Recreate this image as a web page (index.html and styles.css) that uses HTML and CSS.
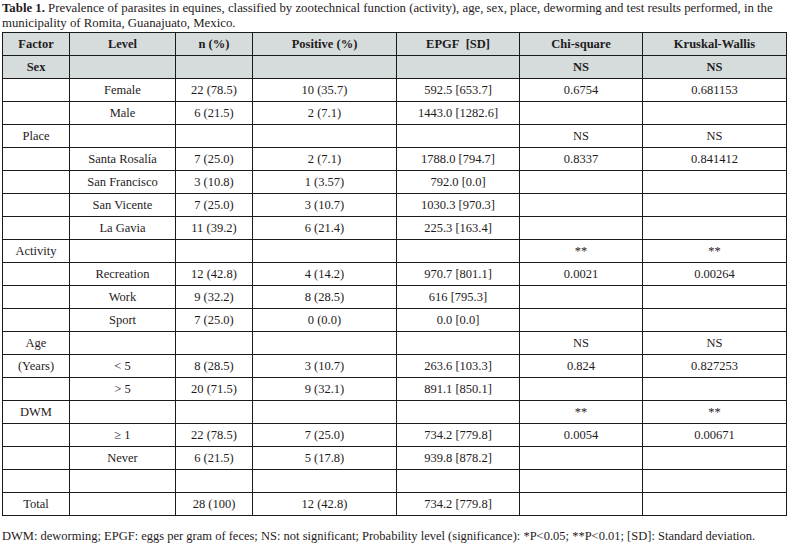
FILE: index.html
```html
<!DOCTYPE html>
<html>
<head>
<meta charset="utf-8">
<link rel="stylesheet" href="styles.css">
</head>
<body>
<div class="page">
  <p class="caption"><b>Table 1.</b> Prevalence of parasites in equines, classified by zootechnical function (activity), age, sex, place, deworming and test results performed, in the municipality of Romita, Guanajuato, Mexico.</p>
  <table class="data">
    <colgroup>
      <col class="c1"><col class="c2"><col class="c3"><col class="c4"><col class="c5"><col class="c6"><col class="c7">
    </colgroup>
    <tr class="head"><th>Factor</th><th>Level</th><th>n (%)</th><th>Positive (%)</th><th>EPGF&nbsp; [SD]</th><th>Chi-square</th><th>Kruskal-Wallis</th></tr>
    <tr class="head"><th>Sex</th><td></td><td></td><td></td><td></td><th>NS</th><th>NS</th></tr>
    <tr><td></td><td>Female</td><td>22 (78.5)</td><td>10 (35.7)</td><td>592.5 [653.7]</td><td>0.6754</td><td>0.681153</td></tr>
    <tr><td></td><td>Male</td><td>6 (21.5)</td><td>2 (7.1)</td><td>1443.0 [1282.6]</td><td></td><td></td></tr>
    <tr><td>Place</td><td></td><td></td><td></td><td></td><td>NS</td><td>NS</td></tr>
    <tr><td></td><td>Santa Rosalía</td><td>7 (25.0)</td><td>2 (7.1)</td><td>1788.0 [794.7]</td><td>0.8337</td><td>0.841412</td></tr>
    <tr><td></td><td>San Francisco</td><td>3 (10.8)</td><td>1 (3.57)</td><td>792.0 [0.0]</td><td></td><td></td></tr>
    <tr><td></td><td>San Vicente</td><td>7 (25.0)</td><td>3 (10.7)</td><td>1030.3 [970.3]</td><td></td><td></td></tr>
    <tr><td></td><td>La Gavia</td><td>11 (39.2)</td><td>6 (21.4)</td><td>225.3 [163.4]</td><td></td><td></td></tr>
    <tr><td>Activity</td><td></td><td></td><td></td><td></td><td>**</td><td>**</td></tr>
    <tr><td></td><td>Recreation</td><td>12 (42.8)</td><td>4 (14.2)</td><td>970.7 [801.1]</td><td>0.0021</td><td>0.00264</td></tr>
    <tr><td></td><td>Work</td><td>9 (32.2)</td><td>8 (28.5)</td><td>616 [795.3]</td><td></td><td></td></tr>
    <tr><td></td><td>Sport</td><td>7 (25.0)</td><td>0 (0.0)</td><td>0.0 [0.0]</td><td></td><td></td></tr>
    <tr><td>Age</td><td></td><td></td><td></td><td></td><td>NS</td><td>NS</td></tr>
    <tr><td>(Years)</td><td>&lt; 5</td><td>8 (28.5)</td><td>3 (10.7)</td><td>263.6 [103.3]</td><td>0.824</td><td>0.827253</td></tr>
    <tr><td></td><td>&gt; 5</td><td>20 (71.5)</td><td>9 (32.1)</td><td>891.1 [850.1]</td><td></td><td></td></tr>
    <tr><td>DWM</td><td></td><td></td><td></td><td></td><td>**</td><td>**</td></tr>
    <tr><td></td><td>≥ 1</td><td>22 (78.5)</td><td>7 (25.0)</td><td>734.2 [779.8]</td><td>0.0054</td><td>0.00671</td></tr>
    <tr><td></td><td>Never</td><td>6 (21.5)</td><td>5 (17.8)</td><td>939.8 [878.2]</td><td></td><td></td></tr>
    <tr><td></td><td></td><td></td><td></td><td></td><td></td><td></td></tr>
    <tr><td>Total</td><td></td><td>28 (100)</td><td>12 (42.8)</td><td>734.2 [779.8]</td><td></td><td></td></tr>
  </table>
  <p class="note">DWM: deworming; EPGF: eggs per gram of feces; NS: not significant; Probability level (significance): *P&lt;0.05; **P&lt;0.01; [SD]: Standard deviation.</p>
</div>
</body>
</html>
```
FILE: styles.css
```css
html, body {
  margin: 0;
  padding: 0;
  background: #ffffff;
}
.page {
  padding: 0 2px;
  font-family: "Liberation Serif", "DejaVu Serif", serif;
  color: #1f1b1c;
  font-size: 12.5px;
}
.caption {
  margin: 0;
  padding-top: 1px;
  line-height: 15px;
  height: 31px;
  font-size: 12.8px;
}
.data {
  border-collapse: collapse;
  width: 784px;
  table-layout: fixed;
}
.c1 { width: 67px; }
.c2 { width: 106px; }
.c3 { width: 77px; }
.c4 { width: 144px; }
.c5 { width: 123px; }
.c6 { width: 123px; }
.c7 { width: 144px; }
.data th,
.data td {
  border: 1px solid #1a1a1a;
  height: 22px;
  padding: 0;
  text-align: center;
  vertical-align: middle;
  line-height: 14px;
  font-size: 12.5px;
}
.data th { font-weight: bold; }
.head th, .head td { background: #d6dcdc; }
.note {
  margin: 13px 0 0;
  line-height: 15px;
}
```
